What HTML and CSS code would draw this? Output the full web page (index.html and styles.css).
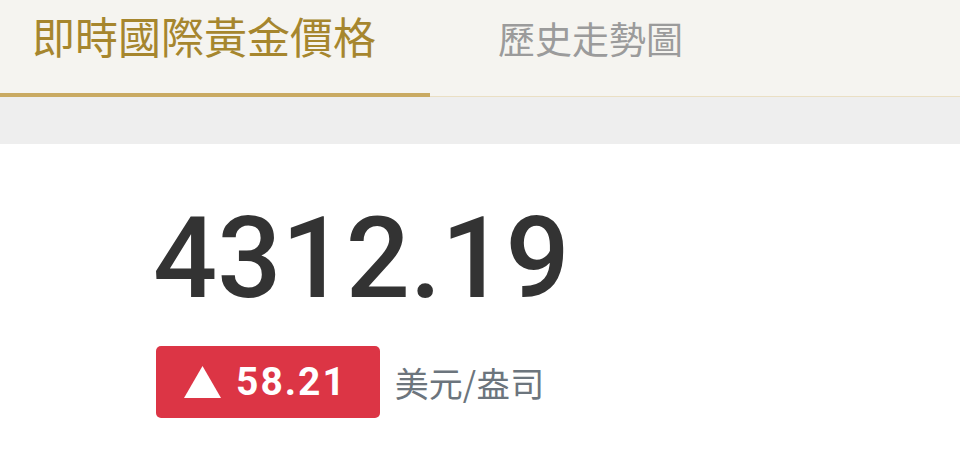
FILE: index.html
```html
<!DOCTYPE html>
<html lang="zh-Hant">
<head>
    <meta charset="UTF-8">
    <meta name="viewport" content="width=device-width, initial-scale=1.0">
    <title>即時國際黃金價格</title>
    <link rel="stylesheet" href="styles.css">
</head>
<body>
    <nav class="tabs">
        <a href="#" class="tab active">即時國際黃金價格</a>
        <a href="#" class="tab">歷史走勢圖</a>
    </nav>
    <div class="band"></div>

    <main class="quote">
        <div class="price">4312.19</div>
        <div class="change-row">
            <span class="change up">
                <svg class="arrow" width="37" height="32" viewBox="0 0 37 32"><polygon points="18.5,0 37,32 0,32" fill="#fff"/></svg>
                <span class="change-value">58.21</span>
            </span>
            <span class="unit">美元/盎司</span>
        </div>
    </main>
</body>
</html>
```

FILE: styles.css
```css
body {
    margin: 0;
    padding: 0;
    background-color: #fff;
    font-family: Roboto, "Noto Sans CJK TC", sans-serif;
}

.tabs {
    display: flex;
    height: 97px;
    box-sizing: border-box;
    background-color: #f5f4f0;
    border-bottom: 1px solid #eadfc4;
}

.tab {
    display: block;
    box-sizing: border-box;
    text-decoration: none;
    font-family: "Noto Sans CJK TC", sans-serif;
    color: #9b9b9b;
    font-size: 37px;
    line-height: 37px;
    padding: 20px 0 0 68px;
}

.tab.active {
    width: 430px;
    height: 97px;
    margin-bottom: -1px;
    padding: 14px 0 0 32px;
    font-size: 43px;
    line-height: 43px;
    color: #a6862e;
    border-bottom: 4px solid #c9aa62;
}

.band {
    height: 47px;
    background-color: #eeeeee;
}

.quote {
    padding: 58px 0 0 153px;
}

.price {
    font-family: Roboto, sans-serif;
    font-size: 113px;
    line-height: 113px;
    font-weight: 500;
    color: #333;
}

.change-row {
    display: flex;
    align-items: center;
    gap: 15px;
    margin-top: 31px;
    margin-left: 3px;
}

.change {
    display: inline-flex;
    align-items: center;
    gap: 15px;
    height: 72px;
    box-sizing: border-box;
    padding: 0 33px 0 28px;
    border-radius: 5px;
    background-color: #dc3545;
    color: #fff;
}

.change-value {
    font-family: Roboto, sans-serif;
    font-size: 39px;
    font-weight: 700;
    letter-spacing: 2px;
}

.unit {
    font-family: "Noto Sans CJK TC", sans-serif;
    font-size: 34px;
    color: #6c757d;
}
```
